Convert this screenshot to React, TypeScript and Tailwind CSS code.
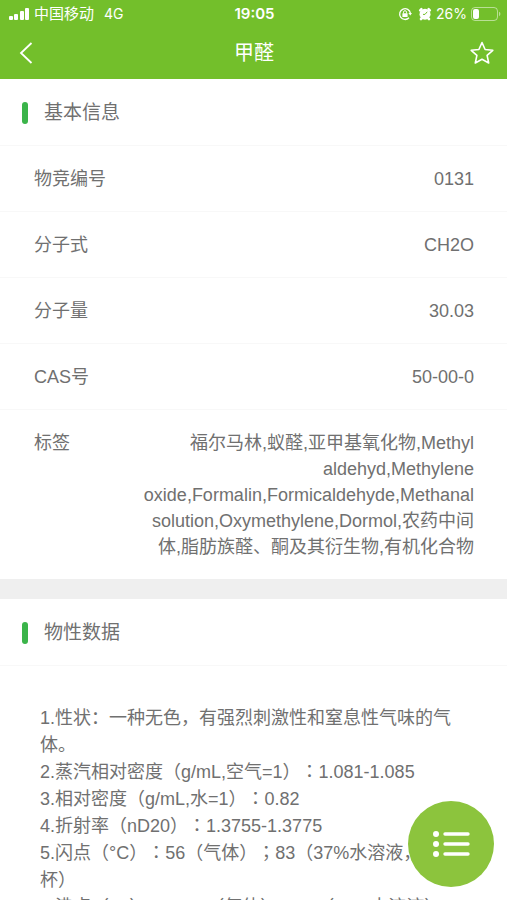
import type { ReactNode } from 'react';

const basicInfo = [
  { label: '物竞编号', value: '0131' },
  { label: '分子式', value: 'CH2O' },
  { label: '分子量', value: '30.03' },
  { label: 'CAS号', value: '50-00-0' },
  {
    label: '标签',
    value:
      '福尔马林,蚁醛,亚甲基氧化物,Methyl aldehyd,Methylene oxide,Formalin,Formicaldehyde,Methanal solution,Oxymethylene,Dormol,农药中间体,脂肪族醛、酮及其衍生物,有机化合物',
  },
];

const properties = [
  '1.性状：一种无色，有强烈刺激性和窒息性气味的气体。',
  '2.蒸汽相对密度（g/mL,空气=1）：1.081-1.085',
  '3.相对密度（g/mL,水=1）：0.82',
  '4.折射率（nD20）：1.3755-1.3775',
  '5.闪点（°C）：56（气体）；83（37%水溶液，闭杯）',
  '6.沸点（°C）：-19.5（气体）；98（37%水溶液）',
];

function StatusBar() {
  return (
    <div className="grid h-7 grid-cols-[1fr_auto_1fr] items-center pr-1.5 pl-2 text-[15px]">
      <div className="flex items-center gap-1">
        <svg width="22" height="14" viewBox="0 0 22 14" fill="currentColor" aria-hidden="true">
          <rect x="1" y="9" width="4" height="4" rx="1" />
          <rect x="6" y="7" width="4" height="6" rx="1" />
          <rect x="12" y="4" width="4" height="9" rx="1" />
          <rect x="17" y="1" width="4" height="12" rx="1" />
        </svg>
        <span>中国移动</span>
        <span className="ml-1.5 text-sm">4G</span>
      </div>
      <span className="font-semibold">19:05</span>
      <div className="flex items-center justify-end gap-1">
        <svg width="14" height="14" viewBox="0 0 14 14" fill="none" stroke="currentColor" aria-hidden="true">
          <path d="M12.4 6.2A5.4 5.4 0 1 0 11 10.8" strokeWidth="1.3" />
          <path d="M10.4 6h3.6l-1.7 2.6z" fill="currentColor" stroke="none" />
          <rect x="4.4" y="6.2" width="5.2" height="3.8" rx="0.5" fill="currentColor" stroke="none" />
          <path d="M5.5 6.4V5.2a1.5 1.5 0 0 1 3 0v1.2" strokeWidth="1" />
        </svg>
        <svg className="ml-0.5" width="14" height="14" viewBox="0 0 14 14" aria-hidden="true">
          <path d="M2.2 3.4 3.4 2.2M10.6 2.2l1.2 1.2M3 12l1.4-1.4M11 12l-1.4-1.4" stroke="currentColor" strokeWidth="2.6" strokeLinecap="round" />
          <circle cx="7" cy="7.2" r="5.5" fill="currentColor" />
          <path d="M9.2 4.8 7 7.4H5" stroke="#73bf2b" strokeWidth="1" fill="none" />
        </svg>
        <span className="text-sm">26%</span>
        <svg width="30" height="14" viewBox="0 0 30 14" aria-hidden="true">
          <rect x="0.5" y="0.5" width="26" height="13" rx="3.5" fill="none" stroke="currentColor" opacity="0.5" />
          <rect x="2" y="2" width="6" height="10" rx="2" fill="currentColor" />
          <path d="M28 4.8a2.4 2.4 0 0 1 0 4.4z" fill="currentColor" opacity="0.5" />
        </svg>
      </div>
    </div>
  );
}

function Section({ title, children }: { title: string; children: ReactNode }) {
  return (
    <section className="bg-white">
      <div className="flex h-[67px] items-center gap-4 border-b border-[#f8f8f8] px-[22px] pt-0.5">
        <span className="h-[22px] w-[6px] rounded-full bg-[#3bb44a]" />
        <h2 className="text-[19px]">{title}</h2>
      </div>
      {children}
    </section>
  );
}

// colons and semicolons after a closing bracket sit in the middle of their square
function PropertyLine({ text }: { text: string }) {
  return (
    <p>
      {text.split(/(）[：；])/).map((part, i) =>
        i % 2 === 1 ? (
          <span key={i}>
            ）<span className="font-['Noto_Sans_CJK_TC',sans-serif] leading-none" lang="zh-TW">{part[1]}</span>
          </span>
        ) : (
          part
        ),
      )}
    </p>
  );
}

export default function App() {
  return (
    <div className="flex h-screen flex-col overflow-hidden bg-[#efefef] font-['Liberation_Sans','Noto_Sans_CJK_SC',sans-serif] text-[#707070] [text-spacing-trim:space-all]">
      <header className="shrink-0 bg-[#73bf2b] font-['Inter','Noto_Sans_CJK_SC',sans-serif] text-white">
        <StatusBar />
        <div className="flex h-[51px] items-center justify-between pr-[11px] pb-0.5 pl-3">
          <button type="button" aria-label="返回" className="flex size-7 items-center justify-center">
            <svg width="14" height="22" viewBox="0 0 14 22" fill="none" stroke="currentColor" strokeWidth="1.8" aria-hidden="true">
              <path d="M12.5 1 2 11l10.5 10" />
            </svg>
          </button>
          <h1 className="text-xl">甲醛</h1>
          <button type="button" aria-label="收藏" className="flex size-7 items-center justify-center">
            <svg width="24" height="24" viewBox="0 0 24 24" fill="none" stroke="currentColor" strokeWidth="1.6" strokeLinejoin="round" aria-hidden="true">
              <path d="M12 1.5l3.1 7 7.7.8-5.7 5.1 1.6 7.6L12 18.2 5.3 22l1.6-7.6L1.2 9.3l7.7-.8z" />
            </svg>
          </button>
        </div>
      </header>

      <main className="flex min-h-0 flex-1 flex-col gap-5 overflow-y-auto [scrollbar-width:none]">
        <Section title="基本信息">
          <dl className="text-lg leading-[26px]">
            {basicInfo.map((item) => (
              <div
                key={item.label}
                className="flex justify-between gap-16 border-b border-[#f8f8f8] pt-5 pr-[33px] pb-[19px] pl-[34px] last:border-0"
              >
                <dt className="shrink-0">{item.label}</dt>
                <dd className="text-right">{item.value}</dd>
              </div>
            ))}
          </dl>
        </Section>

        <Section title="物性数据">
          <div className="px-10 py-[39px] text-lg leading-[27px]">
            {properties.map((line) => (
              <PropertyLine key={line} text={line} />
            ))}
          </div>
        </Section>
      </main>

      <button
        type="button"
        aria-label="目录"
        className="fixed right-[13px] bottom-[13px] flex size-[86px] items-center justify-center rounded-full bg-[#8cc43d] text-white"
      >
        <svg width="38" height="28" viewBox="0 0 38 28" fill="none" stroke="currentColor" strokeWidth="3.4" strokeLinecap="round" aria-hidden="true">
          <path d="M13 4h23M13 14h23M13 24h23" />
          <path d="M4 4h.01M4 14h.01M4 24h.01" strokeWidth="6" />
        </svg>
      </button>
    </div>
  );
}
